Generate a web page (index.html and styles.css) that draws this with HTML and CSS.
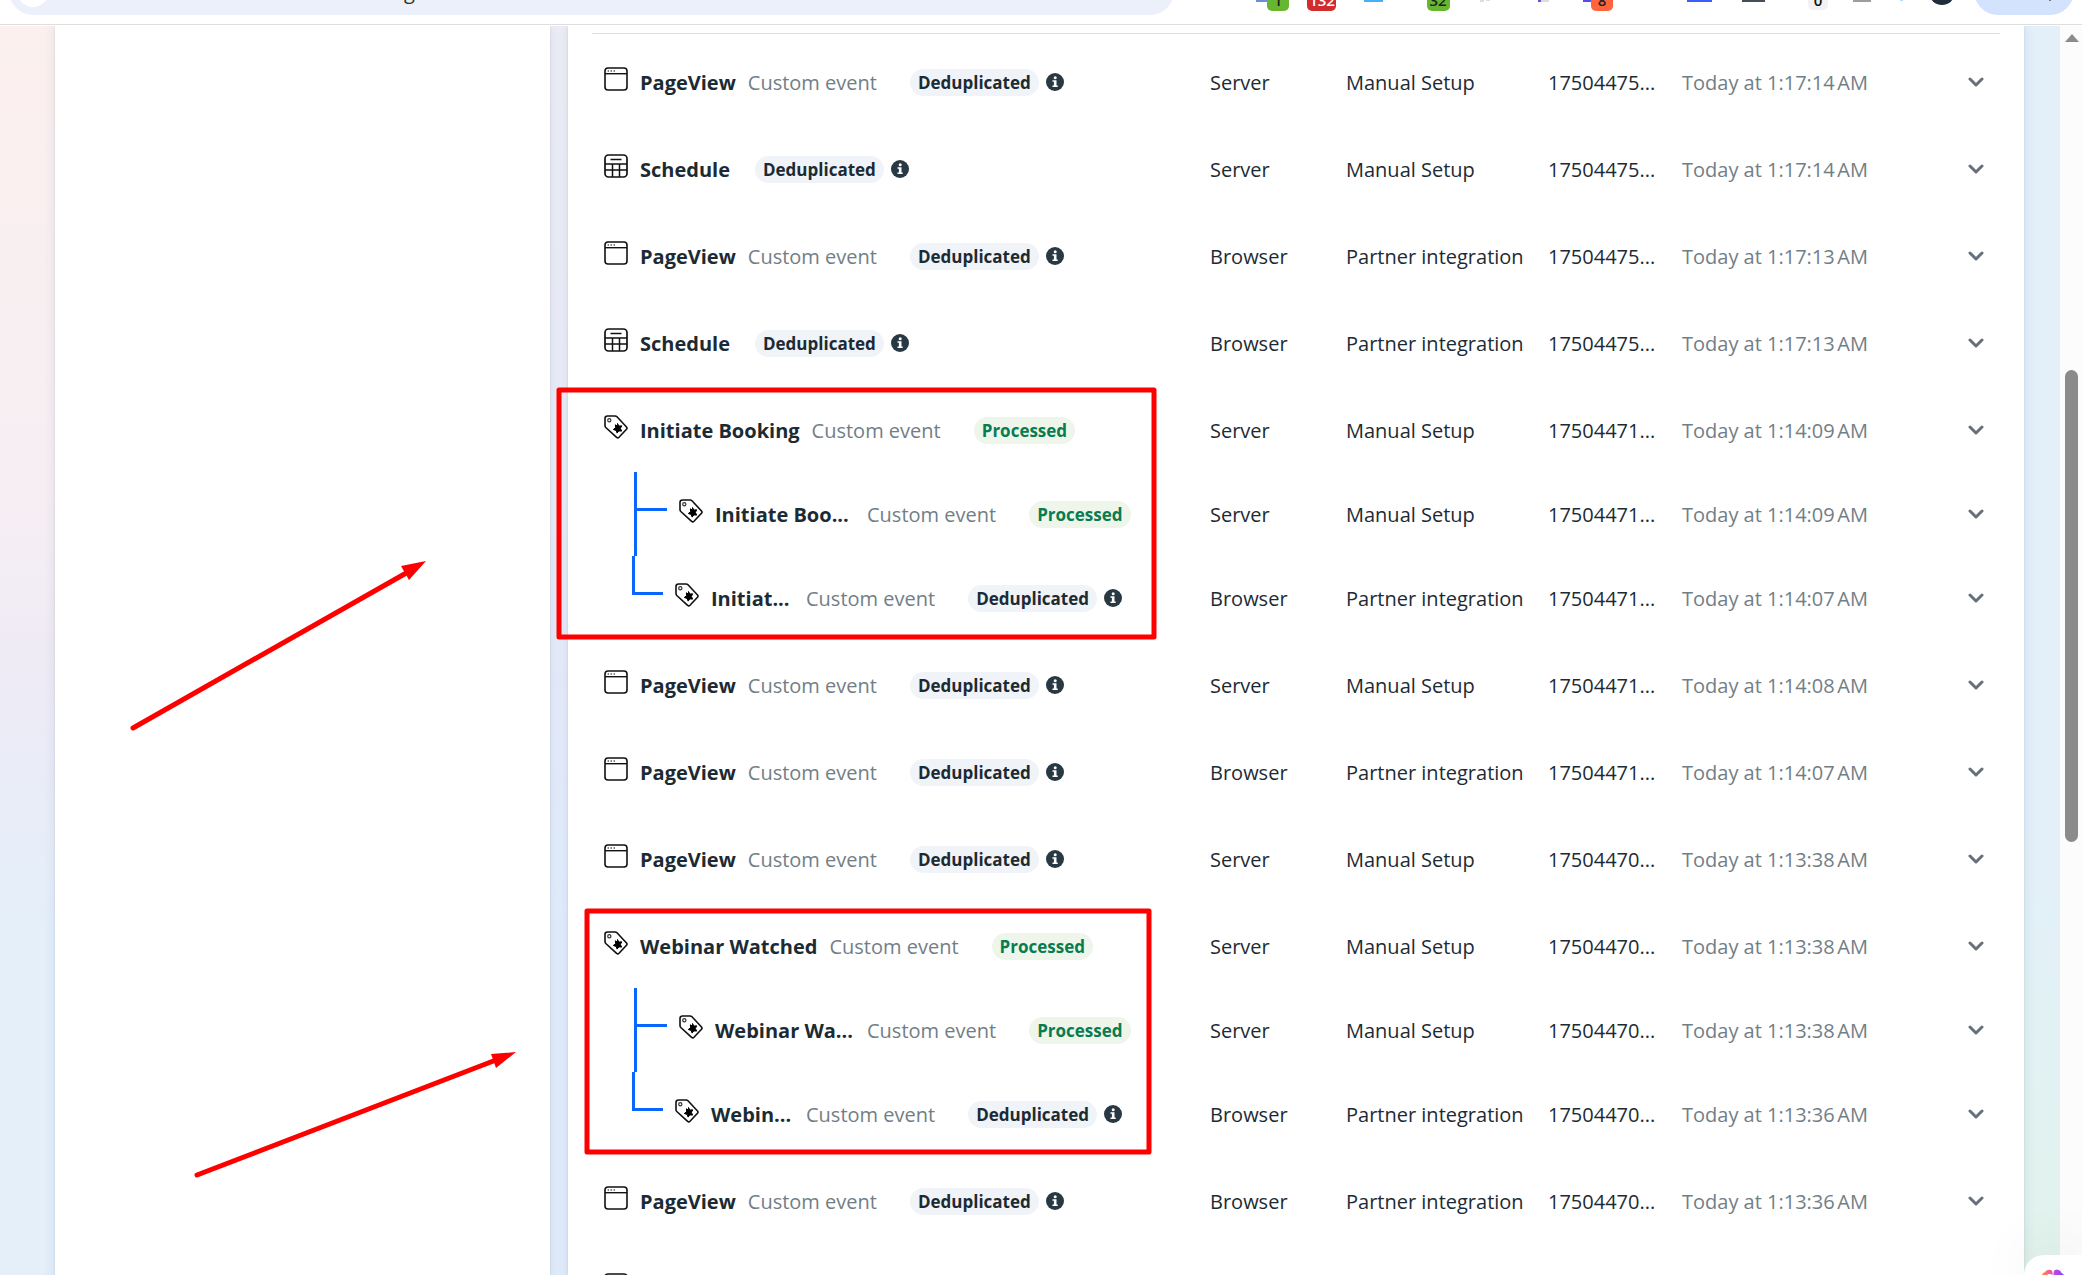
FILE: index.html
```
<!DOCTYPE html>
<html lang="en">
  <head>
    <meta charset="utf-8">
    <title>Events Manager</title>
    <link rel="stylesheet" href="styles.css">
  </head>
  <body>
    <svg class="sprite" aria-hidden="true">
      <symbol id="i-page" viewBox="0 0 24 24">
        <rect x="1" y="1" width="22" height="22" rx="3" fill="none" stroke="#111" stroke-width="1.6"/>
        <path d="M1 6.7h22" stroke="#111" stroke-width="1.4"/>
        <path d="M3.6 4h1.4M6.6 4h1.4M9.6 4h1.4" stroke="#555" stroke-width="1.4"/>
      </symbol>
      <symbol id="i-schedule" viewBox="0 0 24 24">
        <rect x="1" y="1" width="22" height="22" rx="3.5" fill="none" stroke="#111" stroke-width="1.7"/>
        <path d="M1 10h22M1 16h22M8.5 10v13M15.5 10v13M6.5 5.5h11" fill="none" stroke="#111" stroke-width="1.5"/>
      </symbol>
      <symbol id="i-tag" viewBox="0 0 24 24">
        <path d="M1 3.5Q1 1 3.5 1H11q1.200 0 2 .8L22.500 12q1 1.200 0 2.300l-7.500 8q-1.200 1.200-2.400 0L1.800 12.500Q1 11.700 1 10.500z" fill="none" stroke="#111" stroke-width="1.6"/>
        <circle cx="5.300" cy="5.300" r="1.600" fill="none" stroke="#333" stroke-width="1.200"/>
        <path d="M13.500 8.500l1.300 2.600 2.900-.3-1.300 2.700 1.300 2.600-2.900-.2-1.700 2.200-1-2.700-2.800-.9 2.300-1.800-.2-2.900 2.300 1.500z" fill="#000" stroke="#000"/>
      </symbol>
      <symbol id="i-info" viewBox="0 0 18 18">
        <circle cx="9" cy="9" r="9" fill="#283943"/>
        <circle cx="9.200" cy="4.700" r="1.500" fill="#fff"/>
        <path d="M6.500 7.300h4v5.200h1.200V14H6.500v-1.500h1.400V8.800H6.500z" fill="#fff"/>
      </symbol>
      <symbol id="i-chevron" viewBox="0 0 16 10">
        <path d="M2 2l6 6 6-6" fill="none" stroke="#65707a" stroke-width="3" stroke-linecap="round" stroke-linejoin="round"/>
      </symbol>
    </svg>

    <header class="browser-bar">
      <div class="address">
        <span class="site-info"></span>
        <input class="url" type="text" value="g" aria-label="Address">
      </div>
      <svg class="extensions" viewBox="0 0 842 24" width="842" height="24">
        <path d="M16 0h11v2H16z" fill="#6a8fd8"/>
        <rect x="27" y="-8" width="22" height="19" rx="5" fill="#66b72f"/>
        <text x="38" y="6" fill="#222">1</text>
        <rect x="67" y="-8" width="29" height="19" rx="5" fill="#d22d2d"/>
        <text x="82" y="6" fill="#fff">132</text>
        <path d="M124 0h19v2h-19z" fill="#46b0f5"/>
        <rect x="187" y="-8" width="23" height="19" rx="5" fill="#66b72f"/>
        <text x="198" y="6" fill="#222">32</text>
        <path d="M240 0h4v2h-4zM246 0h4v1h-4z" fill="#ddd"/>
        <path d="M298 0h3v2h-3z" fill="#6b52d9"/>
        <path d="M301 0h8v2h-8z" fill="#ddd"/>
        <path d="M343 0h8v2h-8z" fill="#5b4be6"/>
        <rect x="351" y="-8" width="22" height="19" rx="5" fill="#ff643c"/>
        <text x="362" y="6" fill="#222">8</text>
        <path d="M447 0h25v2h-25z" fill="#3e5cf6"/>
        <path d="M502 0h23v2h-23z" fill="#43505c"/>
        <rect x="568" y="-8" width="20" height="18" rx="5" fill="#f2f2f2"/>
        <text x="578" y="6" fill="#111">0</text>
        <path d="M613 0h18v2h-18z" fill="#9e9e9e"/>
        <path d="M660 0h3v1h-3z" fill="#b9d5fb"/>
        <circle cx="702" cy="-8" r="13" fill="#1f2d3d"/>
        <rect x="734" y="-33" width="100" height="48" rx="24" fill="#d3e3fd"/>
        <path d="M809 0h2v1h-2z" fill="#777"/>
      </svg>
    </header>

    <div class="viewport">
      <main class="page">
        <aside class="card side"></aside>
        <section class="card events">
          <div class="table-wrap">
            <table>
              <colgroup>
                <col class="c-event"><col class="c-from"><col class="c-method"><col class="c-id"><col class="c-time"><col class="c-more">
              </colgroup>
              <tbody>
                <tr>
                  <td class="name"><div class="event"><svg class="icon"><use href="#i-page"/></svg><b>PageView</b><span class="kind">Custom event</span><span class="badge">Deduplicated</span><svg class="info"><use href="#i-info"/></svg></div></td>
                  <td>Server</td><td>Manual Setup</td><td>17504475...</td><td class="time">Today at 1:17:14&#8239;AM</td>
                  <td class="more"><button aria-label="Expand"><svg><use href="#i-chevron"/></svg></button></td>
                </tr>
                <tr>
                  <td class="name"><div class="event"><svg class="icon"><use href="#i-schedule"/></svg><b>Schedule</b><span class="badge">Deduplicated</span><svg class="info"><use href="#i-info"/></svg></div></td>
                  <td>Server</td><td>Manual Setup</td><td>17504475...</td><td class="time">Today at 1:17:14&#8239;AM</td>
                  <td class="more"><button aria-label="Expand"><svg><use href="#i-chevron"/></svg></button></td>
                </tr>
                <tr>
                  <td class="name"><div class="event"><svg class="icon"><use href="#i-page"/></svg><b>PageView</b><span class="kind">Custom event</span><span class="badge">Deduplicated</span><svg class="info"><use href="#i-info"/></svg></div></td>
                  <td>Browser</td><td>Partner integration</td><td>17504475...</td><td class="time">Today at 1:17:13&#8239;AM</td>
                  <td class="more"><button aria-label="Expand"><svg><use href="#i-chevron"/></svg></button></td>
                </tr>
                <tr>
                  <td class="name"><div class="event"><svg class="icon"><use href="#i-schedule"/></svg><b>Schedule</b><span class="badge">Deduplicated</span><svg class="info"><use href="#i-info"/></svg></div></td>
                  <td>Browser</td><td>Partner integration</td><td>17504475...</td><td class="time">Today at 1:17:13&#8239;AM</td>
                  <td class="more"><button aria-label="Expand"><svg><use href="#i-chevron"/></svg></button></td>
                </tr>

                <tr class="grouped">
                  <td class="name"><div class="event"><svg class="icon"><use href="#i-tag"/></svg><b>Initiate Booking</b><span class="kind">Custom event</span><span class="badge ok">Processed</span></div></td>
                  <td>Server</td><td>Manual Setup</td><td>17504471...</td><td class="time">Today at 1:14:09&#8239;AM</td>
                  <td class="more"><button aria-label="Expand"><svg><use href="#i-chevron"/></svg></button></td>
                </tr>
                <tr class="grouped">
                  <td class="name"><div class="event child"><span class="branch"></span><svg class="icon"><use href="#i-tag"/></svg><b>Initiate Boo...</b><span class="kind">Custom event</span><span class="badge ok">Processed</span></div></td>
                  <td>Server</td><td>Manual Setup</td><td>17504471...</td><td class="time">Today at 1:14:09&#8239;AM</td>
                  <td class="more"><button aria-label="Expand"><svg><use href="#i-chevron"/></svg></button></td>
                </tr>
                <tr>
                  <td class="name"><div class="event child last"><span class="branch"></span><svg class="icon"><use href="#i-tag"/></svg><b>Initiat...</b><span class="kind">Custom event</span><span class="badge">Deduplicated</span><svg class="info"><use href="#i-info"/></svg></div></td>
                  <td>Browser</td><td>Partner integration</td><td>17504471...</td><td class="time">Today at 1:14:07&#8239;AM</td>
                  <td class="more"><button aria-label="Expand"><svg><use href="#i-chevron"/></svg></button></td>
                </tr>

                <tr>
                  <td class="name"><div class="event"><svg class="icon"><use href="#i-page"/></svg><b>PageView</b><span class="kind">Custom event</span><span class="badge">Deduplicated</span><svg class="info"><use href="#i-info"/></svg></div></td>
                  <td>Server</td><td>Manual Setup</td><td>17504471...</td><td class="time">Today at 1:14:08&#8239;AM</td>
                  <td class="more"><button aria-label="Expand"><svg><use href="#i-chevron"/></svg></button></td>
                </tr>
                <tr>
                  <td class="name"><div class="event"><svg class="icon"><use href="#i-page"/></svg><b>PageView</b><span class="kind">Custom event</span><span class="badge">Deduplicated</span><svg class="info"><use href="#i-info"/></svg></div></td>
                  <td>Browser</td><td>Partner integration</td><td>17504471...</td><td class="time">Today at 1:14:07&#8239;AM</td>
                  <td class="more"><button aria-label="Expand"><svg><use href="#i-chevron"/></svg></button></td>
                </tr>
                <tr>
                  <td class="name"><div class="event"><svg class="icon"><use href="#i-page"/></svg><b>PageView</b><span class="kind">Custom event</span><span class="badge">Deduplicated</span><svg class="info"><use href="#i-info"/></svg></div></td>
                  <td>Server</td><td>Manual Setup</td><td>17504470...</td><td class="time">Today at 1:13:38&#8239;AM</td>
                  <td class="more"><button aria-label="Expand"><svg><use href="#i-chevron"/></svg></button></td>
                </tr>

                <tr class="grouped">
                  <td class="name"><div class="event"><svg class="icon"><use href="#i-tag"/></svg><b>Webinar Watched</b><span class="kind">Custom event</span><span class="badge ok">Processed</span></div></td>
                  <td>Server</td><td>Manual Setup</td><td>17504470...</td><td class="time">Today at 1:13:38&#8239;AM</td>
                  <td class="more"><button aria-label="Expand"><svg><use href="#i-chevron"/></svg></button></td>
                </tr>
                <tr class="grouped">
                  <td class="name"><div class="event child"><span class="branch"></span><svg class="icon"><use href="#i-tag"/></svg><b>Webinar Wa...</b><span class="kind">Custom event</span><span class="badge ok">Processed</span></div></td>
                  <td>Server</td><td>Manual Setup</td><td>17504470...</td><td class="time">Today at 1:13:38&#8239;AM</td>
                  <td class="more"><button aria-label="Expand"><svg><use href="#i-chevron"/></svg></button></td>
                </tr>
                <tr>
                  <td class="name"><div class="event child last"><span class="branch"></span><svg class="icon"><use href="#i-tag"/></svg><b>Webin...</b><span class="kind">Custom event</span><span class="badge">Deduplicated</span><svg class="info"><use href="#i-info"/></svg></div></td>
                  <td>Browser</td><td>Partner integration</td><td>17504470...</td><td class="time">Today at 1:13:36&#8239;AM</td>
                  <td class="more"><button aria-label="Expand"><svg><use href="#i-chevron"/></svg></button></td>
                </tr>

                <tr>
                  <td class="name"><div class="event"><svg class="icon"><use href="#i-page"/></svg><b>PageView</b><span class="kind">Custom event</span><span class="badge">Deduplicated</span><svg class="info"><use href="#i-info"/></svg></div></td>
                  <td>Browser</td><td>Partner integration</td><td>17504470...</td><td class="time">Today at 1:13:36&#8239;AM</td>
                  <td class="more"><button aria-label="Expand"><svg><use href="#i-chevron"/></svg></button></td>
                </tr>
                <tr>
                  <td class="name"><div class="event"><svg class="icon"><use href="#i-page"/></svg></div></td>
                  <td></td><td></td><td></td><td></td><td></td>
                </tr>
              </tbody>
            </table>
          </div>
        </section>
      </main>
      <div class="scrollbar"><span class="up"></span><span class="thumb"></span></div>
    </div>

    <!-- red markup drawn over the page -->
    <svg class="markup" aria-hidden="true">
      <g fill="none" stroke="#f00" stroke-width="5" stroke-linejoin="round">
        <rect x="559" y="390" width="595" height="247"/>
        <rect x="587" y="911" width="562" height="241"/>
        <path d="M133 728L408 572M197 1175L496 1060" stroke-linecap="round"/>
      </g>
      <path d="M426 561L401 566L409 580zM516 1052L491 1054L496 1068z" fill="#f00"/>
    </svg>

    <button class="assistant" aria-label="Assistant">
      <svg viewBox="0 0 24 12" width="24" height="12">
        <defs>
          <linearGradient id="brain" x1="0" x2="1" y1="0" y2="0">
            <stop offset="0" stop-color="#ff9a2e"/>
            <stop offset=".4" stop-color="#f653a6"/>
            <stop offset=".6" stop-color="#b845e8"/>
            <stop offset="1" stop-color="#7a4df0"/>
          </linearGradient>
        </defs>
        <path d="M0 8Q1 4 4 3q2-3 6-2 2 1 1.500 5v6H0zM12.500 12V4q0-3 3-3.500 4 0 5 3.500 3 1 3.500 5v3z" fill="url(#brain)"/>
        <path d="M5 7q3-3 6-1M14 7q3 0 4 4" fill="none" stroke="#fff"/>
      </svg>
    </button>
  </body>
</html>
```
FILE: styles.css
```
* {
  box-sizing: border-box;
}

body {
  margin: 0;
  height: 100vh;
  overflow: hidden;
  display: flex;
  flex-direction: column;
  position: relative;
  background: #fff;
  color: #1c2b33;
  font-family: "Segoe UI", "Open Sans", sans-serif;
  font-size: 20px;
  line-height: 28px;
}

.sprite {
  position: absolute;
  width: 0;
  height: 0;
}

/* browser toolbar */
.browser-bar {
  flex: none;
  height: 26px;
  display: flex;
  justify-content: space-between;
  align-items: flex-start;
  overflow: hidden;
  background: linear-gradient(#dedede, #dedede) 0 24px / 100% 1px no-repeat #fff;
}

.address {
  flex: 0 1 1165px;
  height: 48px;
  margin: -33px 0 0 9px;
  padding: 8px;
  display: flex;
  border-radius: 24px;
  background: #ebf0fa;
}

.site-info {
  flex: none;
  width: 32px;
  height: 32px;
  border-radius: 50%;
  background: #fff;
}

.url {
  flex: 1;
  min-width: 0;
  height: 32px;
  padding: 0 0 0 355px;
  border: 0;
  background: none;
  color: #333;
  font: 20px "Open Sans", sans-serif;
}

.extensions {
  flex: none;
}

.extensions text {
  font: 600 15px "Open Sans", sans-serif;
  text-anchor: middle;
}

/* page */
.viewport {
  flex: 1;
  min-height: 0;
  display: flex;
}

.page {
  flex: 1;
  min-width: 0;
  display: grid;
  grid-template-columns: 495px minmax(0, 1fr);
  gap: 18px;
  padding: 0 36px 0 55px;
  overflow: hidden;
  background:
    linear-gradient(#e3f0fa 0%, #e3f0fa 65%, #e2f3ec 100%) right / 36px 100% no-repeat,
    linear-gradient(90deg, rgba(222, 235, 255, 0) 5%, rgba(222, 235, 255, 0.5) 27%),
    linear-gradient(#fbf0ee 0%, #f6eef3 38%, #eeebf6 52%, #e9edf8 62%, #e4effa 72%, #e4effa 100%);
}

.card {
  background: #fff;
  box-shadow: 0 0 12px rgba(40, 60, 90, 0.1), 0 0 2px rgba(40, 60, 90, 0.12);
}

.events {
  padding: 7px 24px 0;
}

.table-wrap {
  padding-top: 6px;
  border-top: 1px solid #dadde0;
}

table {
  width: 100%;
  table-layout: fixed;
  border-collapse: collapse;
}

.c-event {
  width: 618px;
}

.c-from {
  width: 136px;
}

.c-method {
  width: 202px;
}

.c-id {
  width: 134px;
}

.c-more {
  width: 48px;
}

td {
  height: 87px;
  padding: 2px 0 3px;
  vertical-align: middle;
  white-space: nowrap;
}

.name,
.more {
  padding-top: 0;
}

.grouped td {
  height: 84px;
  padding-bottom: 0;
}

.time,
.kind {
  color: #727e86;
}

.more {
  text-align: center;
}

.more button {
  display: block;
  margin: 0 auto;
  padding: 8px;
  border: 0;
  background: none;
  cursor: pointer;
}

.more svg {
  display: block;
  width: 16px;
  height: 10px;
}

.event {
  height: 84px;
  padding-left: 12px;
  display: flex;
  align-items: center;
}

.event b,
.kind {
  padding-top: 2px;
}

.icon {
  flex: none;
  width: 24px;
  height: 24px;
  margin: 0 12px 6px 0;
}

.kind {
  margin: 0 8px 0 12px;
}

.badge {
  margin-left: 25px;
  padding: 0 8px;
  border-radius: 14px;
  background: #f0f3f7;
  font-size: 17px;
  font-weight: 700;
  line-height: 27px;
}

.badge.ok {
  background: #eef6eb;
  color: #087c50;
}

.info {
  flex: none;
  width: 18px;
  height: 18px;
  margin-left: 7px;
}

/* nested events */
.child {
  padding-left: 42px;
}

.child b {
  width: 140px;
}

.branch {
  align-self: stretch;
  position: relative;
  width: 33px;
  margin-right: 12px;
  border-left: 3px solid #0a66ff;
}

.branch::after {
  content: "";
  position: absolute;
  top: 36px;
  left: 0;
  right: 0;
  height: 3px;
  background: #0a66ff;
}

.last {
  padding-left: 40px;
}

.last b {
  width: 83px;
}

.last .branch {
  width: 31px;
  height: 39px;
  align-self: flex-start;
}

/* scrollbar */
.scrollbar {
  flex: none;
  width: 22px;
  padding: 8px 4px 0 5px;
  display: flex;
  flex-direction: column;
  align-items: center;
  background: #fcfcfc;
}

.up {
  border: 7px solid transparent;
  border-top: 0;
  border-bottom: 8px solid #8b8b8b;
}

.thumb {
  width: 13px;
  height: 38%;
  margin-top: 328px;
  border-radius: 7px;
  background: #8b8b8b;
}

.markup {
  position: absolute;
  top: 0;
  left: 0;
  width: 100%;
  height: 100%;
  pointer-events: none;
}

.assistant {
  position: absolute;
  right: 0;
  bottom: 0;
  width: 58px;
  height: 20px;
  padding: 14px 0 0 17px;
  border: 0;
  border-radius: 24px 0 0 0;
  background: #fff;
  box-shadow: 0 0 60px rgba(0, 0, 0, 0.12);
  overflow: hidden;
  text-align: left;
}

.assistant svg {
  display: block;
}
```
